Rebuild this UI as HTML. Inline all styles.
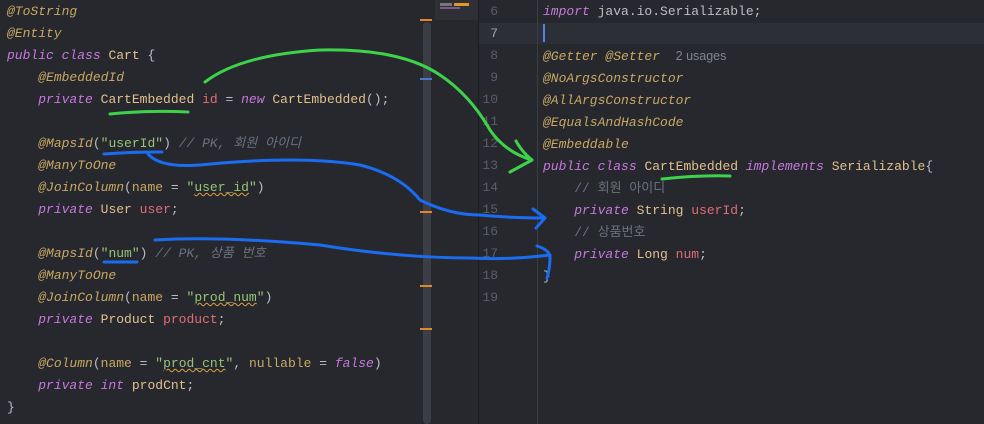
<!DOCTYPE html>
<html><head><meta charset="utf-8"><style>
body{margin:0;width:984px;height:424px;background:#26282e;overflow:hidden;position:relative;font-family:"Liberation Mono","Noto Sans CJK KR",monospace;font-size:13px}
pre{margin:0;font:inherit;line-height:22px;position:absolute;top:1px;white-space:pre}
.a{color:#c9a862;font-style:italic}.k{color:#c678dd;font-style:italic}.c{color:#e2c08d}.t{color:#bbbec4}
.s{color:#98c379}.f{color:#e06c75}.m{color:#6b717d;font-style:italic}.p{color:#c9a862}
.w{text-decoration:underline wavy #e0a040;text-decoration-thickness:1px}
</style></head><body>
<div style="position:absolute;left:478px;top:0;width:506px;height:424px;background:#26282e;border-left:1px solid #1c1d21"></div>
<div style="position:absolute;left:479px;top:23px;width:505px;height:21px;background:#2c2f36"></div>
<div style="position:absolute;left:537px;top:0;width:1px;height:424px;background:#3a3d44"></div>
<div style="position:absolute;left:423px;top:22px;width:8px;height:402px;background:#3b3e44;border-radius:4px"></div>
<div style="position:absolute;left:420px;top:19px;width:12px;height:2px;background:#e0872a"></div>
<div style="position:absolute;left:420px;top:78px;width:12px;height:2px;background:#4a78c8"></div>
<div style="position:absolute;left:420px;top:211px;width:12px;height:2px;background:#e0872a"></div>
<div style="position:absolute;left:420px;top:285px;width:12px;height:2px;background:#e0872a"></div>
<div style="position:absolute;left:420px;top:328px;width:12px;height:2px;background:#e0872a"></div>
<div style="position:absolute;left:435px;top:0;width:43px;height:20px;background:#2e3036"></div>
<div style="position:absolute;left:440px;top:3px;width:12px;height:3px;background:#777"></div>
<div style="position:absolute;left:454px;top:3px;width:15px;height:3px;background:#e0962a"></div>
<div style="position:absolute;left:440px;top:7px;width:20px;height:2px;background:#7a5c88"></div>
<div style="position:absolute;left:543px;top:24px;width:2px;height:18px;background:#4f86e0"></div>
<pre style="left:7px"><span class="a">@ToString</span>
<span class="a">@Entity</span>
<span class="k">public class</span> <span class="c">Cart</span> <span class="t">{</span>
    <span class="a">@EmbeddedId</span>
    <span class="k">private</span> <span class="c">CartEmbedded</span> <span class="f">id</span> <span class="t">=</span> <span class="k">new</span> <span class="c">CartEmbedded</span><span class="t">();</span>

    <span class="a">@MapsId</span><span class="t">(</span><span class="s">"userId"</span><span class="t">)</span> <span class="m">// PK, 회원 아이디</span>
    <span class="a">@ManyToOne</span>
    <span class="a">@JoinColumn</span><span class="t">(</span><span class="p">name</span> <span class="t">=</span> <span class="s">"<span class="w">user_id</span>"</span><span class="t">)</span>
    <span class="k">private</span> <span class="c">User</span> <span class="f">user</span><span class="t">;</span>

    <span class="a">@MapsId</span><span class="t">(</span><span class="s">"num"</span><span class="t">)</span> <span class="m">// PK, 상품 번호</span>
    <span class="a">@ManyToOne</span>
    <span class="a">@JoinColumn</span><span class="t">(</span><span class="p">name</span> <span class="t">=</span> <span class="s">"<span class="w">prod_num</span>"</span><span class="t">)</span>
    <span class="k">private</span> <span class="c">Product</span> <span class="f">product</span><span class="t">;</span>

    <span class="a">@Column</span><span class="t">(</span><span class="p">name</span> <span class="t">=</span> <span class="s">"<span class="w">prod_cnt</span>"</span><span class="t">,</span> <span class="p">nullable</span> <span class="t">=</span> <span class="k">false</span><span class="t">)</span>
    <span class="k">private int</span> <span class="c">prodCnt</span><span class="t">;</span>
<span class="t">}</span></pre>
<pre style="left:480px;width:18px;text-align:right;color:#5a5e66">6
<span style="color:#a0a4ab">7</span>
8
9
10
11
12
13
14
15
16
17
18
19</pre>
<pre style="left:543px"><span class="k">import</span> <span class="t">java.io.Serializable;</span>

<span class="a">@Getter @Setter</span>  <span style="font-family:'Liberation Sans',sans-serif;font-size:12.5px;color:#80848c">2 usages</span>
<span class="a">@NoArgsConstructor</span>
<span class="a">@AllArgsConstructor</span>
<span class="a">@EqualsAndHashCode</span>
<span class="a">@Embeddable</span>
<span class="k">public class</span> <span class="c">CartEmbedded</span> <span class="k">implements</span> <span class="c">Serializable</span><span class="t">{</span>
    <span class="m" style="font-style:normal">// 회원 아이디</span>
    <span class="k">private</span> <span class="c">String</span> <span class="f">userId</span><span class="t">;</span>
    <span class="m" style="font-style:normal">// 상품번호</span>
    <span class="k">private</span> <span class="c">Long</span> <span class="f">num</span><span class="t">;</span>
<span class="t">}</span></pre>
<svg width="984" height="424" style="position:absolute;left:0;top:0" fill="none" stroke-linecap="round" stroke-linejoin="round">
<g stroke="#3ed24a" stroke-width="3">
<path d="M110 114 Q150 110 188 112"/>
<path d="M205 82 Q240 55 320 50 Q400 48 440 75 Q470 95 490 130 Q505 152 532 160"/>
<path d="M516 141 Q522 152 532 160 L510 172"/>
<path d="M662 179 Q700 175 730 176"/>
</g>
<g stroke="#1a6cf0" stroke-width="3">
<path d="M104 154 Q130 152 162 152"/>
<path d="M148 154 Q160 168 200 165 Q300 155 360 165 Q400 175 420 200 Q450 215 480 215 Q510 218 545 218"/>
<path d="M533 209 L545 218 L536 228"/>
<path d="M104 262 Q120 262 137 262"/>
<path d="M155 240 Q220 236 320 245 Q400 258 470 258 Q510 260 550 255"/>
<path d="M537 246 Q550 250 550 258 Q550 268 547 278"/>
</g>
</svg>
</body></html>
